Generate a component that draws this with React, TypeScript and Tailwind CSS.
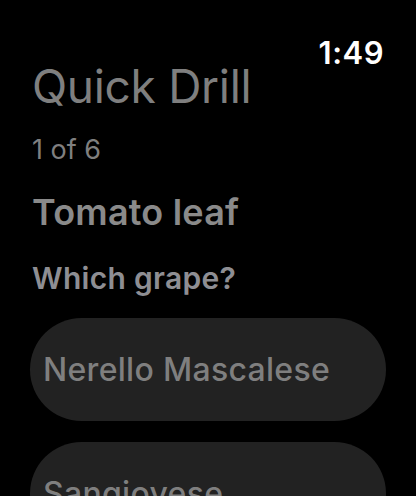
export default function App() {
    const options = ['Nerello Mascalese', 'Sangiovese'];

    return (
        <div className="w-[416px] h-[496px] overflow-hidden bg-black" style={{ fontFamily: 'Inter, "Noto Sans", sans-serif' }}>
            <div className="flex justify-end pr-[32px] pt-[37px]">
                <span className="text-[31px] leading-none font-semibold text-white tracking-[0.5px]">1:49</span>
            </div>
            <div className="flex flex-col pl-[32px] pr-[30px]">
                <h1 className="mt-[-5px] text-[46px] leading-none font-normal text-[#7f7f7f] tracking-[-0.3px]">Quick Drill</h1>
                <p className="mt-[27px] text-[27px] leading-none text-[#7f7f7f]">1 of 6</p>
                <p className="mt-[31px] text-[36px] leading-none font-semibold text-[#8a8a8a] tracking-[0.2px]">Tomato leaf</p>
                <p className="mt-[33px] text-[30px] leading-none font-semibold text-[#8e8e93] tracking-[0.3px]">Which grape?</p>
                <div className="mt-[25px] ml-[-2px] flex flex-col gap-[21px]">
                    {options.map((option) => (
                        <div key={option} className="h-[103px] w-[356px] rounded-full bg-[#222222] flex items-center pl-[13px]">
                            <span className="text-[32px] leading-none font-medium text-[#7f7f7f] tracking-[0.3px]">{option}</span>
                        </div>
                    ))}
                </div>
            </div>
        </div>
    );
}
